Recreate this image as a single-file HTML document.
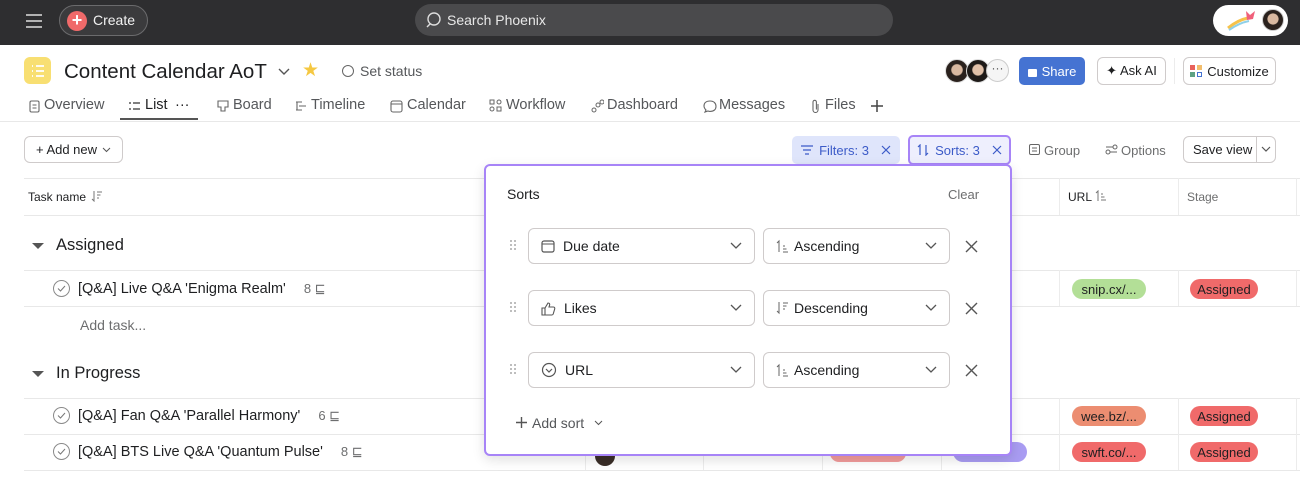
<!DOCTYPE html>
<html><head><meta charset="utf-8"><style>
*{box-sizing:border-box;margin:0;padding:0}
body{width:1300px;height:477px;overflow:hidden;background:#fff;font-family:"Liberation Sans",sans-serif;color:#1e1f21;position:relative}
.a{position:absolute}
.top{left:0;top:0;width:1300px;height:45px;background:#2e2e30}
.hl{border-top:1px solid #e8e8e8;height:0}
.vl{border-left:1px solid #ececec;width:0}
.btn{position:absolute;border:1px solid #cfcbcb;border-radius:6px;background:#fff;font-size:13px;display:flex;align-items:center;justify-content:center;gap:5px}
.tab{position:absolute;top:97px;font-size:14.5px;color:#55575a}
.ti{position:absolute;top:99px}
.pill{position:absolute;height:20px;border-radius:10px;font-size:13px;display:flex;align-items:center;justify-content:center;color:#1e1f21}
.sel{position:absolute;height:36px;border:1px solid #cfcbcb;border-radius:6px;font-size:14px;display:flex;align-items:center;padding-left:12px;gap:8px}
.chev{position:absolute;right:12px;top:13px}
.task{position:absolute;font-size:14.5px;display:flex;align-items:center;gap:8px}
.cc{width:17px;height:17px;border:1.3px solid #8a8a8a;border-radius:50%;display:flex;align-items:center;justify-content:center}
.sub{color:#6d6e6f;font-size:13px;margin-left:10px}
.dr{position:absolute;width:6px;height:12px}
</style></head><body>
<div class="a top"></div>
<svg class="a" style="left:25px;top:13px" width="18" height="16"><path d="M1 2h16M1 8h16M1 14h16" stroke="#ddd" stroke-width="1.6"/></svg>
<div class="a" style="left:59px;top:5px;width:89px;height:31px;border:1px solid #6b6b6d;border-radius:16px;background:#3b3b3d"></div>
<div class="a" style="left:67px;top:11px;width:20px;height:20px;border-radius:50%;background:#f06a6a;color:#fff;font-size:18px;line-height:19px;text-align:center;font-weight:bold">+</div>
<div class="a" style="left:93px;top:12px;color:#f2f2f2;font-size:14px">Create</div>
<div class="a" style="left:415px;top:4px;width:478px;height:32px;border-radius:16px;background:#4a4a4c"></div>
<svg class="a" style="left:425px;top:11px" width="18" height="18"><circle cx="9" cy="8" r="6" fill="none" stroke="#ddd" stroke-width="1.4"/><path d="M5 13l-3 3" stroke="#ddd" stroke-width="1.4"/></svg>
<div class="a" style="left:447px;top:12px;color:#e8e8e8;font-size:14px">Search Phoenix</div>
<div class="a" style="left:1213px;top:5px;width:75px;height:31px;border-radius:16px;background:#fff"></div>
<svg class="a" style="left:1226px;top:8px" width="32" height="24"><path d="M2 20Q12 12 22 10" stroke="#f6c24a" stroke-width="3" fill="none"/><path d="M3 22Q13 15 23 13" stroke="#8fd0e8" stroke-width="2" fill="none"/><path d="M20 3l4 4 5-4-2 8-6 1z" fill="#f0607a"/></svg>
<div class="a" style="left:1262px;top:9px;width:22px;height:22px;border-radius:50%;background:radial-gradient(circle at 50% 45%,#d9b8a0 35%,#2a211d 40%);border:1px solid #ccc"></div>

<div class="a" style="left:24px;top:57px;width:27px;height:27px;border-radius:6px;background:#f8df72"></div>
<svg class="a" style="left:29px;top:62px" width="18" height="18"><path d="M3 4h1M3 9h1M3 14h1M7 4h8M7 9h8M7 14h8" stroke="#fff" stroke-width="1.8"/></svg>
<div class="a" style="left:64px;top:60px;font-size:20.5px">Content Calendar AoT</div>
<svg class="a" style="left:277px;top:67px" width="14" height="9"><path d="M2 2l5 5 5-5" stroke="#555" stroke-width="1.4" fill="none"/></svg>
<div class="a" style="left:302px;top:59px;color:#f5c842;font-size:19px">★</div>
<div class="a" style="left:342px;top:65px;width:12px;height:12px;border:1.3px solid #666;border-radius:50%"></div>
<div class="a" style="left:360px;top:63px;font-size:14px;color:#55575a">Set status</div>
<div class="a" style="left:945px;top:59px;width:24px;height:24px;border-radius:50%;background:radial-gradient(circle at 50% 45%,#d9b8a0 32%,#2a211d 38%);border:1px solid #ddd"></div>
<div class="a" style="left:966px;top:59px;width:24px;height:24px;border-radius:50%;background:radial-gradient(circle at 50% 45%,#e0c0a8 32%,#1e1a18 38%);border:1px solid #ddd"></div>
<div class="a" style="left:986px;top:59px;width:23px;height:23px;border-radius:50%;background:#f5f5f5;border:1px solid #ccc;font-size:12px;text-align:center;line-height:16px;color:#555">···</div>
<div class="a" style="left:1019px;top:57px;width:66px;height:28px;border-radius:5px;background:#4573d2;color:#fff;font-size:13px;display:flex;align-items:center;justify-content:center;gap:5px"><span style="display:inline-block;width:9px;height:8px;background:#fff;border-radius:1px;margin-top:3px"></span>Share</div>
<div class="btn" style="left:1097px;top:57px;width:69px;height:28px">✦ Ask AI</div>
<div class="a vl" style="left:1174px;top:58px;height:26px"></div>
<div class="btn" style="left:1183px;top:57px;width:93px;height:28px"><svg width="12" height="12"><rect x="0" y="0" width="5" height="5" fill="#e8615b"/><rect x="7" y="0" width="5" height="5" fill="#f1bd6c"/><rect x="0" y="7" width="5" height="5" fill="#5da283"/><rect x="7.5" y="7.5" width="4" height="4" fill="none" stroke="#4573d2"/></svg>Customize</div>

<!-- tabs -->
<svg class="ti" style="left:29px" width="11" height="14"><rect x="1" y="2" width="9" height="11" rx="1.5" fill="none" stroke="#666" stroke-width="1.1"/><path d="M3.5 6h4M3.5 9h4" stroke="#666"/></svg>
<div class="tab" style="left:44px">Overview</div>
<svg class="ti" style="left:128px" width="13" height="14"><path d="M1 4h2M1 10h2M5 4h7M5 10h7" stroke="#333" stroke-width="1.3"/></svg>
<div class="tab" style="left:145px;color:#1e1f21">List</div>
<div class="tab" style="left:175px;color:#1e1f21">···</div>
<div class="a" style="left:120px;top:118px;width:78px;height:2px;background:#555"></div>
<svg class="ti" style="left:217px" width="12" height="14"><path d="M1 2h10v6H8v4H4V8H1z" fill="none" stroke="#666" stroke-width="1.1"/></svg>
<div class="tab" style="left:233px">Board</div>
<svg class="ti" style="left:295px" width="12" height="14"><path d="M1 3h6M4 7h7M1 11h6M2 3v8" stroke="#666" stroke-width="1.1" fill="none"/></svg>
<div class="tab" style="left:311px">Timeline</div>
<svg class="ti" style="left:390px" width="13" height="14"><rect x="1" y="2" width="11" height="11" rx="2" fill="none" stroke="#666" stroke-width="1.1"/><path d="M1 5h11" stroke="#666"/></svg>
<div class="tab" style="left:407px">Calendar</div>
<svg class="ti" style="left:489px" width="14" height="14"><rect x="1" y="1" width="4" height="4" fill="none" stroke="#666"/><rect x="8" y="1" width="4" height="4" rx="2" fill="none" stroke="#666"/><rect x="1" y="8" width="4" height="4" rx="2" fill="none" stroke="#666"/><rect x="8" y="8" width="4" height="4" fill="none" stroke="#666"/></svg>
<div class="tab" style="left:506px">Workflow</div>
<svg class="ti" style="left:591px" width="13" height="14"><circle cx="3" cy="11" r="2" fill="none" stroke="#666"/><circle cx="7" cy="6" r="2" fill="none" stroke="#666"/><circle cx="11" cy="3" r="2" fill="none" stroke="#666"/></svg>
<div class="tab" style="left:607px">Dashboard</div>
<svg class="ti" style="left:703px" width="14" height="14"><path d="M7 2C3 2 1 4 1 7c0 2 1 3 2 4l-1 2 3-1c1 .4 1.5 .4 2 .4 4 0 6-2 6-5S11 2 7 2z" fill="none" stroke="#666" stroke-width="1.1"/></svg>
<div class="tab" style="left:719px">Messages</div>
<svg class="ti" style="left:810px" width="11" height="14"><path d="M8 5v6a2.5 2.5 0 0 1-5 0V3a1.7 1.7 0 0 1 3.4 0v7.5" fill="none" stroke="#666" stroke-width="1.1"/></svg>
<div class="tab" style="left:825px">Files</div>
<svg class="a" style="left:870px;top:99px" width="14" height="14"><path d="M7 1v12M1 7h12" stroke="#444" stroke-width="1.5"/></svg>
<div class="a hl" style="left:0;top:121px;width:1300px"></div>

<!-- toolbar -->
<div class="btn" style="left:24px;top:136px;width:99px;height:27px">+ Add new <svg width="9" height="6"><path d="M1 1l3.5 3.5L8 1" stroke="#555" fill="none"/></svg></div>
<div class="a" style="left:792px;top:136px;width:108px;height:28px;border-radius:5px;background:#dfe5fb;color:#3c5bc8;font-size:13px;display:flex;align-items:center;justify-content:center;gap:6px"><svg width="12" height="10"><path d="M0 1h12M2 5h8M4 9h4" stroke="#3c5bc8" stroke-width="1.2"/></svg>Filters: 3 <svg style="margin-left:6px" width="10" height="10"><path d="M1 1l8 8M9 1L1 9" stroke="#3c5bc8" stroke-width="1.2"/></svg></div>
<div class="a" style="left:908px;top:135px;width:103px;height:30px;border-radius:5px;border:2px solid #a784f7;background:#eeeffd;color:#3c5bc8;font-size:13px;display:flex;align-items:center;justify-content:center;gap:6px"><svg width="12" height="12"><path d="M3 11V1L1 3M9 1v10l2-2" stroke="#3c5bc8" stroke-width="1.2" fill="none"/></svg>Sorts: 3 <svg style="margin-left:6px" width="10" height="10"><path d="M1 1l8 8M9 1L1 9" stroke="#3c5bc8" stroke-width="1.2"/></svg></div>
<svg class="a" style="left:1029px;top:144px" width="11" height="11"><rect x=".5" y=".5" width="10" height="10" rx="1.5" fill="none" stroke="#666"/><path d="M3 4h5M3 7h5" stroke="#666"/></svg>
<div class="a" style="left:1044px;top:143px;font-size:13px;color:#6d6e6f">Group</div>
<svg class="a" style="left:1105px;top:144px" width="13" height="11"><circle cx="3" cy="8" r="2" fill="none" stroke="#666"/><circle cx="10" cy="3" r="2" fill="none" stroke="#666"/><path d="M5 8h7M1 3h7" stroke="#666"/></svg>
<div class="a" style="left:1121px;top:143px;font-size:13px;color:#6d6e6f">Options</div>
<div class="btn" style="left:1183px;top:136px;width:93px;height:27px;justify-content:flex-start;padding-left:9px">Save view</div>
<div class="a vl" style="left:1256px;top:137px;height:25px;border-color:#cfcbcb"></div>
<svg class="a" style="left:1261px;top:146px" width="10" height="7"><path d="M1 1l4 4 4-4" stroke="#555" stroke-width="1.2" fill="none"/></svg>

<!-- table -->
<div class="a hl" style="left:24px;top:178px;width:1276px"></div>
<div class="a hl" style="left:24px;top:215px;width:1276px"></div>
<div class="a" style="left:28px;top:190px;font-size:12px;color:#1e1f21">Task name</div>
<svg class="a" style="left:91px;top:190px" width="12" height="12"><path d="M3 1v10L1 9" stroke="#777" fill="none"/><path d="M6 2h5M6 5h3.5M6 8h2" stroke="#777"/></svg>
<div class="a vl" style="left:1059px;top:178px;height:37px"></div>
<div class="a vl" style="left:1178px;top:178px;height:37px"></div>
<div class="a vl" style="left:1296px;top:178px;height:37px"></div>
<div class="a" style="left:1068px;top:190px;font-size:12px">URL</div>
<svg class="a" style="left:1095px;top:190px" width="12" height="12"><path d="M3 11V1L1 3" stroke="#777" fill="none"/><path d="M6 4h2M6 7h3.5M6 10h5" stroke="#777"/></svg>
<div class="a" style="left:1187px;top:190px;font-size:12px;color:#6d6e6f">Stage</div>

<div class="a" style="left:32px;top:243px;width:0;height:0;border-left:6px solid transparent;border-right:6px solid transparent;border-top:6px solid #555"></div>
<div class="a" style="left:56px;top:236px;font-size:16.5px">Assigned</div>
<div class="a hl" style="left:24px;top:270px;width:1276px"></div>
<div class="a hl" style="left:24px;top:306px;width:1276px"></div>
<div class="task" style="left:53px;top:280px"><div class="cc"><svg width="9" height="7"><path d="M1 3.5l2.5 2.5L8 1" stroke="#777" fill="none"/></svg></div>[Q&amp;A] Live Q&amp;A 'Enigma Realm'<span class="sub">8 ⊑</span></div>
<div class="a" style="left:80px;top:317px;font-size:14px;color:#6d6e6f">Add task...</div>
<div class="a vl" style="left:1059px;top:270px;height:36px"></div>
<div class="a vl" style="left:1178px;top:270px;height:36px"></div>
<div class="a vl" style="left:1296px;top:270px;height:36px"></div>
<div class="pill" style="left:1072px;top:279px;width:74px;background:#b3df97">snip.cx/...</div>
<div class="pill" style="left:1190px;top:279px;width:68px;background:#f06a6a">Assigned</div>

<div class="a" style="left:32px;top:371px;width:0;height:0;border-left:6px solid transparent;border-right:6px solid transparent;border-top:6px solid #555"></div>
<div class="a" style="left:56px;top:364px;font-size:16.5px">In Progress</div>
<div class="a hl" style="left:24px;top:398px;width:1276px"></div>
<div class="a hl" style="left:24px;top:434px;width:1276px"></div>
<div class="a hl" style="left:24px;top:470px;width:1276px"></div>
<div class="task" style="left:53px;top:407px"><div class="cc"><svg width="9" height="7"><path d="M1 3.5l2.5 2.5L8 1" stroke="#777" fill="none"/></svg></div>[Q&amp;A] Fan Q&amp;A 'Parallel Harmony'<span class="sub">6 ⊑</span></div>
<div class="task" style="left:53px;top:443px"><div class="cc"><svg width="9" height="7"><path d="M1 3.5l2.5 2.5L8 1" stroke="#777" fill="none"/></svg></div>[Q&amp;A] BTS Live Q&amp;A 'Quantum Pulse'<span class="sub">8 ⊑</span></div>
<div class="a vl" style="left:585px;top:434px;height:36px"></div>
<div class="a vl" style="left:703px;top:434px;height:36px"></div>
<div class="a vl" style="left:822px;top:434px;height:36px"></div>
<div class="a vl" style="left:941px;top:434px;height:36px"></div>
<div class="a vl" style="left:1059px;top:398px;height:72px"></div>
<div class="a vl" style="left:1178px;top:398px;height:72px"></div>
<div class="a vl" style="left:1296px;top:398px;height:72px"></div>
<div class="a" style="left:595px;top:446px;width:20px;height:20px;border-radius:50%;background:#3a2e28"></div>
<div class="a" style="left:830px;top:444px;width:76px;height:18px;border-radius:9px;background:#f29c9c"></div>
<div class="a" style="left:953px;top:442px;width:74px;height:20px;border-radius:10px;background:#a99cf2"></div>
<div class="pill" style="left:1072px;top:406px;width:74px;background:#ec8d71">wee.bz/...</div>
<div class="pill" style="left:1190px;top:406px;width:68px;background:#f06a6a">Assigned</div>
<div class="pill" style="left:1072px;top:442px;width:74px;background:#f06a6a">swft.co/...</div>
<div class="pill" style="left:1190px;top:442px;width:68px;background:#f06a6a">Assigned</div>

<!-- popup -->
<div class="a" style="left:484px;top:164px;width:528px;height:292px;border:2px solid #a784f7;border-radius:6px;background:#fff;box-shadow:0 4px 12px rgba(0,0,0,.12)"></div>
<div class="a" style="left:507px;top:186px;font-size:14px;font-weight:500">Sorts</div>
<div class="a" style="left:948px;top:187px;font-size:13px;color:#6d6e6f">Clear</div>

<svg class="dr" style="left:510px;top:240px"><g fill="#aaa"><circle cx="1" cy="1" r="1"/><circle cx="5" cy="1" r="1"/><circle cx="1" cy="5" r="1"/><circle cx="5" cy="5" r="1"/><circle cx="1" cy="9" r="1"/><circle cx="5" cy="9" r="1"/></g></svg>
<div class="sel" style="left:528px;top:228px;width:227px"><svg width="14" height="14"><rect x="1" y="2" width="12" height="11" rx="2" fill="none" stroke="#555" stroke-width="1.2"/><path d="M1 5h12" stroke="#555"/></svg>Due date<svg class="chev" width="12" height="8"><path d="M1 1l5 5 5-5" stroke="#555" stroke-width="1.3" fill="none"/></svg></div>
<div class="sel" style="left:763px;top:228px;width:187px;gap:4px"><svg width="14" height="14"><path d="M3 13V2L1 4" stroke="#666" fill="none"/><path d="M7 7h2M7 10h3.5M7 13h5" stroke="#666"/></svg>Ascending<svg class="chev" width="12" height="8"><path d="M1 1l5 5 5-5" stroke="#555" stroke-width="1.3" fill="none"/></svg></div>
<svg class="a" style="left:965px;top:240px" width="13" height="13"><path d="M1 1l11 11M12 1L1 12" stroke="#555" stroke-width="1.4"/></svg>

<svg class="dr" style="left:510px;top:302px"><g fill="#aaa"><circle cx="1" cy="1" r="1"/><circle cx="5" cy="1" r="1"/><circle cx="1" cy="5" r="1"/><circle cx="5" cy="5" r="1"/><circle cx="1" cy="9" r="1"/><circle cx="5" cy="9" r="1"/></g></svg>
<div class="sel" style="left:528px;top:290px;width:227px"><svg width="15" height="15"><path d="M1 7h3v7H1zM4 7l3-5c1.5 0 2 1 1.5 2.5L8 6h4.5c1 0 1.5 1 1.2 2l-1.5 5c-.2.6-.7 1-1.3 1H4" fill="none" stroke="#555" stroke-width="1.1"/></svg>Likes<svg class="chev" width="12" height="8"><path d="M1 1l5 5 5-5" stroke="#555" stroke-width="1.3" fill="none"/></svg></div>
<div class="sel" style="left:763px;top:290px;width:187px;gap:4px"><svg width="14" height="14"><path d="M3 1v11L1 10" stroke="#666" fill="none"/><path d="M7 2h5M7 5h3.5M7 8h2" stroke="#666"/></svg>Descending<svg class="chev" width="12" height="8"><path d="M1 1l5 5 5-5" stroke="#555" stroke-width="1.3" fill="none"/></svg></div>
<svg class="a" style="left:965px;top:302px" width="13" height="13"><path d="M1 1l11 11M12 1L1 12" stroke="#555" stroke-width="1.4"/></svg>

<svg class="dr" style="left:510px;top:364px"><g fill="#aaa"><circle cx="1" cy="1" r="1"/><circle cx="5" cy="1" r="1"/><circle cx="1" cy="5" r="1"/><circle cx="5" cy="5" r="1"/><circle cx="1" cy="9" r="1"/><circle cx="5" cy="9" r="1"/></g></svg>
<div class="sel" style="left:528px;top:352px;width:227px"><svg width="16" height="16"><circle cx="8" cy="8" r="6.5" fill="none" stroke="#555" stroke-width="1.2"/><path d="M5 7l3 3 3-3" stroke="#555" stroke-width="1.2" fill="none"/></svg>URL<svg class="chev" width="12" height="8"><path d="M1 1l5 5 5-5" stroke="#555" stroke-width="1.3" fill="none"/></svg></div>
<div class="sel" style="left:763px;top:352px;width:187px;gap:4px"><svg width="14" height="14"><path d="M3 13V2L1 4" stroke="#666" fill="none"/><path d="M7 7h2M7 10h3.5M7 13h5" stroke="#666"/></svg>Ascending<svg class="chev" width="12" height="8"><path d="M1 1l5 5 5-5" stroke="#555" stroke-width="1.3" fill="none"/></svg></div>
<svg class="a" style="left:965px;top:364px" width="13" height="13"><path d="M1 1l11 11M12 1L1 12" stroke="#555" stroke-width="1.4"/></svg>

<svg class="a" style="left:516px;top:417px" width="11" height="11"><path d="M5.5 0v11M0 5.5h11" stroke="#555" stroke-width="1.4"/></svg>
<div class="a" style="left:532px;top:415px;font-size:14px;color:#55575a">Add sort</div>
<svg class="a" style="left:594px;top:420px" width="9" height="6"><path d="M1 1l3.5 3.5L8 1" stroke="#555" fill="none"/></svg>
</body></html>
